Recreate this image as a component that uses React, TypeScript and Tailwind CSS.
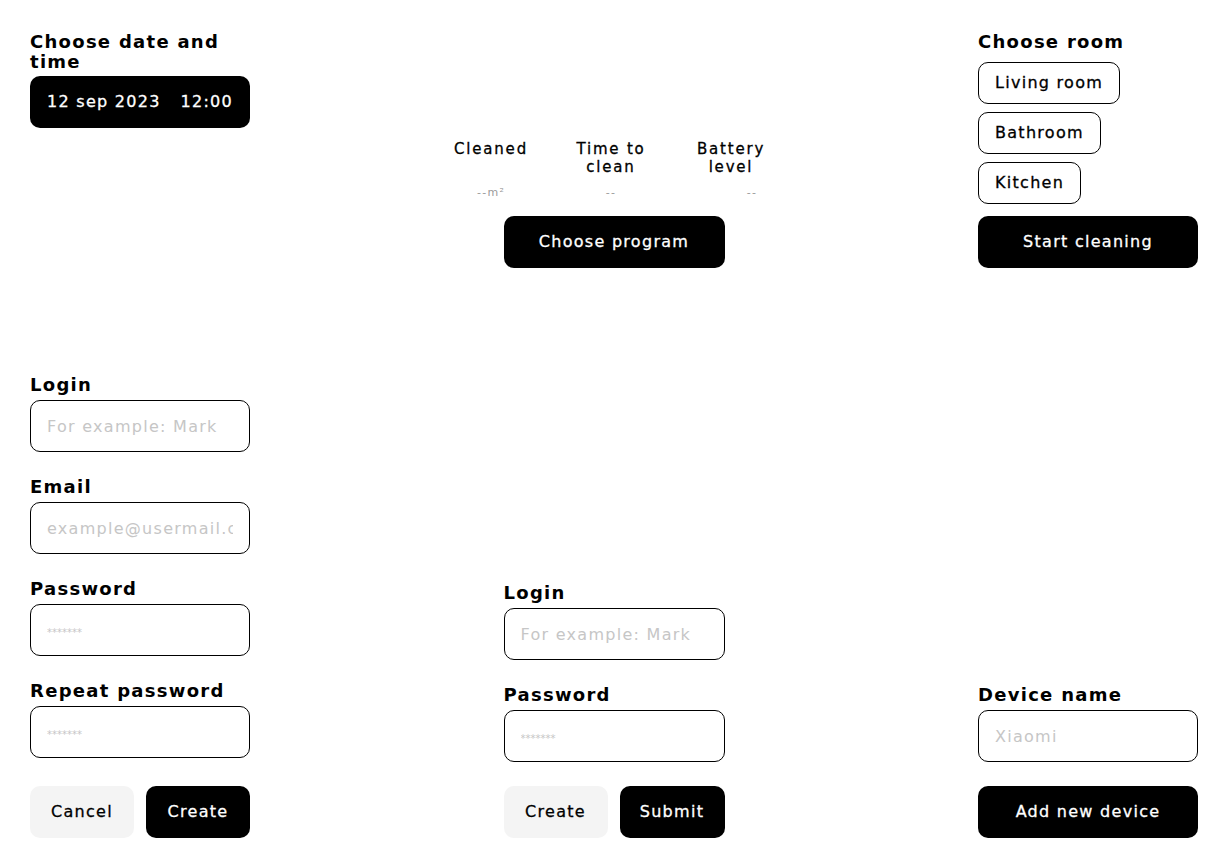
import React from 'react'

const Label: React.FC<{ children: React.ReactNode }> = ({ children }) => (
    <div className="text-[18px] leading-[20px] font-bold text-black">{children}</div>
)

const Field: React.FC<{ label: string; placeholder: string; secret?: boolean }> = ({ label, placeholder, secret }) => (
    <div className="flex flex-col">
        <Label>{label}</Label>
        <input
            type="text"
            placeholder={placeholder}
            className={
                'mt-[5px] h-[52px] w-full rounded-[10px] border border-black bg-white px-[16px] text-[16px] tracking-[0.08em] outline-none placeholder:text-[#c6c6c6] ' +
                (secret ? 'placeholder:text-[10px] placeholder:tracking-normal' : '')
            }
        />
    </div>
)

const DarkButton: React.FC<{ children: React.ReactNode; className?: string }> = ({ children, className }) => (
    <button className={'flex h-[52px] items-center justify-center rounded-[10px] bg-black text-[16px] text-white [-webkit-text-stroke:0.3px_white] ' + (className ?? '')}>
        {children}
    </button>
)

const LightButton: React.FC<{ children: React.ReactNode }> = ({ children }) => (
    <button className="flex h-[52px] w-[104px] items-center justify-center rounded-[10px] bg-[#f4f4f4] text-[16px] text-black [-webkit-text-stroke:0.3px_black]">
        {children}
    </button>
)

const RoomButton: React.FC<{ children: React.ReactNode }> = ({ children }) => (
    <button className="flex h-[42px] items-center self-start rounded-[10px] border border-black bg-white px-[16px] text-[16px] text-black [-webkit-text-stroke:0.3px_black]">
        {children}
    </button>
)

const Stat: React.FC<{ title: React.ReactNode; value: string; shift?: boolean }> = ({ title, value, shift }) => (
    <div className="flex flex-col items-center">
        <div className="h-[36px] text-center text-[15px] leading-[18px] tracking-[0.12em] text-black [-webkit-text-stroke:0.3px_black]">{title}</div>
        <div className={'mt-[10px] h-[14px] w-full text-center text-[11px] leading-[14px] text-[#9b9b9b] ' + (shift ? 'pl-[42px]' : '')}>
            {value}
        </div>
    </div>
)

export default function App() {
    return (
        <div className="flex min-h-screen flex-col justify-between bg-white px-[30px] pt-[32px] pb-[30px] font-['DejaVu_Sans',sans-serif] tracking-[0.08em] text-black">
            {/* top row */}
            <div className="flex justify-between">
                <div className="flex w-[220px] flex-col self-start">
                    <Label>Choose date and time</Label>
                    <DarkButton className="mt-[4px] w-full !justify-between px-[17px]">
                        <span>12 sep 2023</span>
                        <span>12:00</span>
                    </DarkButton>
                </div>

                <div className="flex flex-col items-center self-end">
                    <div className="mr-[6px] grid w-[360px] grid-cols-3">
                        <Stat title="Cleaned" value="--m²" />
                        <Stat title={<>Time to<br />clean</>} value="--" />
                        <Stat title={<>Battery<br />level</>} value="--" shift />
                    </div>
                    <DarkButton className="mt-[16px] w-[221px]">Choose program</DarkButton>
                </div>

                <div className="flex w-[220px] flex-col">
                    <Label>Choose room</Label>
                    <div className="mt-[10px] flex flex-col gap-[8px]">
                        <RoomButton>Living room</RoomButton>
                        <RoomButton>Bathroom</RoomButton>
                        <RoomButton>Kitchen</RoomButton>
                    </div>
                    <DarkButton className="mt-[12px] w-full">Start cleaning</DarkButton>
                </div>
            </div>

            {/* bottom row */}
            <div className="flex items-end justify-between">
                <div className="flex w-[220px] flex-col">
                    <div className="flex flex-col gap-[25px]">
                        <Field label="Login" placeholder="For example: Mark" />
                        <Field label="Email" placeholder="example@usermail.com" />
                        <Field label="Password" placeholder="*******" secret />
                        <Field label="Repeat password" placeholder="*******" secret />
                    </div>
                    <div className="mt-[28px] flex gap-[12px]">
                        <LightButton>Cancel</LightButton>
                        <DarkButton className="w-[104px]">Create</DarkButton>
                    </div>
                </div>

                <div className="flex w-[221px] flex-col">
                    <div className="flex flex-col gap-[25px]">
                        <Field label="Login" placeholder="For example: Mark" />
                        <Field label="Password" placeholder="*******" secret />
                    </div>
                    <div className="mt-[24px] flex gap-[12px]">
                        <LightButton>Create</LightButton>
                        <DarkButton className="w-[105px]">Submit</DarkButton>
                    </div>
                </div>

                <div className="flex w-[220px] flex-col">
                    <Field label="Device name" placeholder="Xiaomi" />
                    <DarkButton className="mt-[24px] w-full">Add new device</DarkButton>
                </div>
            </div>
        </div>
    )
}
